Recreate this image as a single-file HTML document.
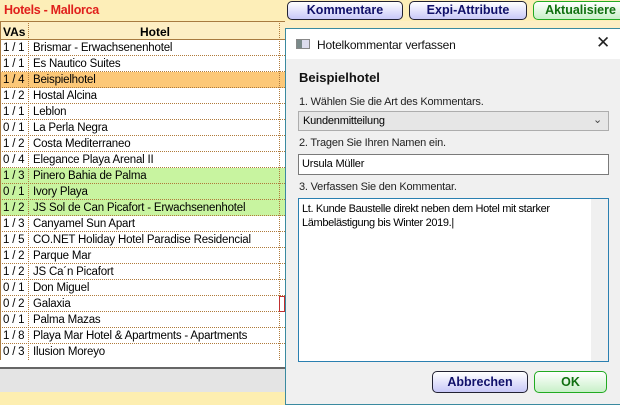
<!DOCTYPE html><html><head><meta charset="utf-8"><style>
*{margin:0;padding:0;box-sizing:border-box}
body{width:620px;height:405px;overflow:hidden;position:relative;background:#fff;font-family:"Liberation Sans",sans-serif;font-size:12px;color:#000}
.top{position:absolute;left:0;top:0;width:620px;height:21px;background:#fdeeb8}
.title{position:absolute;left:4px;top:3px;color:#e0201c;font-weight:bold;font-size:12.5px;letter-spacing:-0.3px}
.btn{position:absolute;top:1px;height:19px;border:1px solid #223;border-radius:5px;font-weight:bold;font-size:12.5px;text-align:center;line-height:17px;background:linear-gradient(#fff,#c8c8f8);color:#10106a}
.btn.g{background:linear-gradient(#fff,#c8f0c8);color:#107010;border-color:#2a2}
.hdr{position:absolute;top:21px;left:0;width:285px;height:19px;background:#fdeec4;border-top:1px solid #a87a40;border-bottom:1px solid #a87a40;font-weight:bold;font-size:12px}
.row{position:absolute;left:0;width:285px;height:16px;border-bottom:1px dotted #b07a3a;font-size:11.5px;line-height:16px;letter-spacing:-0.2px}
.row span{position:absolute}
.c1{left:3px}.c2{left:33px}
.vl{position:absolute;top:21px;width:0;height:339px;border-left:1px dotted #b07a3a}
.dlg{position:absolute;left:285px;top:28px;width:335px;height:377px;background:#f0f0f0;border:1px solid #3a8aa0;border-right:none}
.tb{position:absolute;left:0;top:0;width:100%;height:30px;background:#fff}
.lbl{position:absolute;left:13px;font-size:11px;letter-spacing:-0.2px;color:#222}
.box{position:absolute;background:#fff;border:1px solid #7a7a7a;font-size:11px;letter-spacing:-0.2px}
</style></head><body>
<div class="top"><div class="title">Hotels - Mallorca</div></div>
<div class="btn" style="left:287px;width:116px">Kommentare</div>
<div class="btn" style="left:409px;width:118px">Expi-Attribute</div>
<div class="btn g" style="left:533px;width:95px">Aktualisiere</div>
<div class="hdr"><span style="position:absolute;left:3px;top:3px">VAs</span><span style="position:absolute;left:140px;top:3px">Hotel</span></div>
<div style="position:absolute;left:285px;top:21px;width:335px;height:19px;background:#fdeec4"></div>
<div class="row" style="top:40px"><span class="c1">1 / 1</span><span class="c2">Brismar - Erwachsenenhotel</span></div>
<div class="row" style="top:56px"><span class="c1">1 / 1</span><span class="c2">Es Nautico Suites</span></div>
<div class="row" style="top:72px;background:#fcc878"><span class="c1">1 / 4</span><span class="c2">Beispielhotel</span></div>
<div class="row" style="top:88px"><span class="c1">1 / 2</span><span class="c2">Hostal Alcina</span></div>
<div class="row" style="top:104px"><span class="c1">1 / 1</span><span class="c2">Leblon</span></div>
<div class="row" style="top:120px"><span class="c1">0 / 1</span><span class="c2">La Perla Negra</span></div>
<div class="row" style="top:136px"><span class="c1">1 / 2</span><span class="c2">Costa Mediterraneo</span></div>
<div class="row" style="top:152px"><span class="c1">0 / 4</span><span class="c2">Elegance Playa Arenal II</span></div>
<div class="row" style="top:168px;background:#c8f4a0"><span class="c1">1 / 3</span><span class="c2">Pinero Bahia de Palma</span></div>
<div class="row" style="top:184px;background:#c8f4a0"><span class="c1">0 / 1</span><span class="c2">Ivory Playa</span></div>
<div class="row" style="top:200px;background:#c8f4a0"><span class="c1">1 / 2</span><span class="c2">JS Sol de Can Picafort - Erwachsenenhotel</span></div>
<div class="row" style="top:216px"><span class="c1">1 / 3</span><span class="c2">Canyamel Sun Apart</span></div>
<div class="row" style="top:232px"><span class="c1">1 / 5</span><span class="c2">CO.NET Holiday Hotel Paradise Residencial</span></div>
<div class="row" style="top:248px"><span class="c1">1 / 2</span><span class="c2">Parque Mar</span></div>
<div class="row" style="top:264px"><span class="c1">1 / 2</span><span class="c2">JS Ca´n Picafort</span></div>
<div class="row" style="top:280px"><span class="c1">0 / 1</span><span class="c2">Don Miguel</span></div>
<div class="row" style="top:296px"><span class="c1">0 / 2</span><span class="c2">Galaxia</span></div>
<div class="row" style="top:312px"><span class="c1">0 / 1</span><span class="c2">Palma Mazas</span></div>
<div class="row" style="top:328px"><span class="c1">1 / 8</span><span class="c2">Playa Mar Hotel &amp; Apartments - Apartments</span></div>
<div class="row" style="top:344px;border-bottom:none"><span class="c1">0 / 3</span><span class="c2">Ilusion Moreyo</span></div>
<div class="vl" style="left:0;border-left:1px solid #a87a40"></div>
<div class="vl" style="left:28px"></div>
<div class="vl" style="left:279px"></div>
<div style="position:absolute;left:279px;top:296px;width:6px;height:16px;border:1px solid #c03030"></div>
<div style="position:absolute;left:0;top:367px;width:285px;height:2px;background:#666"></div>
<div style="position:absolute;left:0;top:369px;width:285px;height:23px;background:#e4e4e4"></div>
<div style="position:absolute;left:0;top:392px;width:285px;height:13px;background:#fdeeb0"></div>
<div class="dlg">
 <div class="tb"><div style="position:absolute;left:10px;top:10px;width:14px;height:10px;border:1px solid #888;background:linear-gradient(90deg,#7a8a8a 40%,#dde 40%)"></div>
 <div style="position:absolute;left:31px;top:9px;font-size:12px;letter-spacing:-0.2px;color:#111">Hotelkommentar verfassen</div>
 <div style="position:absolute;left:310px;top:4px;font-size:17px;color:#222">✕</div></div>
 <div style="position:absolute;left:13px;top:41px;font-weight:bold;font-size:13px;color:#111">Beispielhotel</div>
 <div class="lbl" style="top:67px">1. Wählen Sie die Art des Kommentars.</div>
 <div class="box" style="left:12px;top:82px;width:311px;height:20px;background:#e6e6e6;border-color:#adadad"><span style="position:absolute;left:4px;top:3px">Kundenmitteilung</span><span style="position:absolute;right:6px;top:1px;font-size:11px;color:#444">&#8964;</span></div>
 <div class="lbl" style="top:108px">2. Tragen Sie Ihren Namen ein.</div>
 <div class="box" style="left:12px;top:125px;width:311px;height:21px"><span style="position:absolute;left:3px;top:3px">Ursula Müller</span></div>
 <div class="lbl" style="top:152px">3. Verfassen Sie den Kommentar.</div>
 <div class="box" style="left:12px;top:169px;width:311px;height:164px;border-color:#2a7fb0"><div style="position:absolute;left:3px;top:3px;line-height:14px;width:280px;letter-spacing:-0.35px;white-space:nowrap">Lt. Kunde Baustelle direkt neben dem Hotel mit starker<br>Lämbelästigung bis Winter 2019.|</div><div style="position:absolute;right:0;top:0;width:17px;height:162px;background:#f0f0f0"></div></div>
 <div class="btn" style="left:146px;top:342px;width:96px;height:22px;line-height:20px">Abbrechen</div>
 <div class="btn g" style="left:248px;top:342px;width:73px;height:22px;line-height:20px">OK</div>
</div>
</body></html>
